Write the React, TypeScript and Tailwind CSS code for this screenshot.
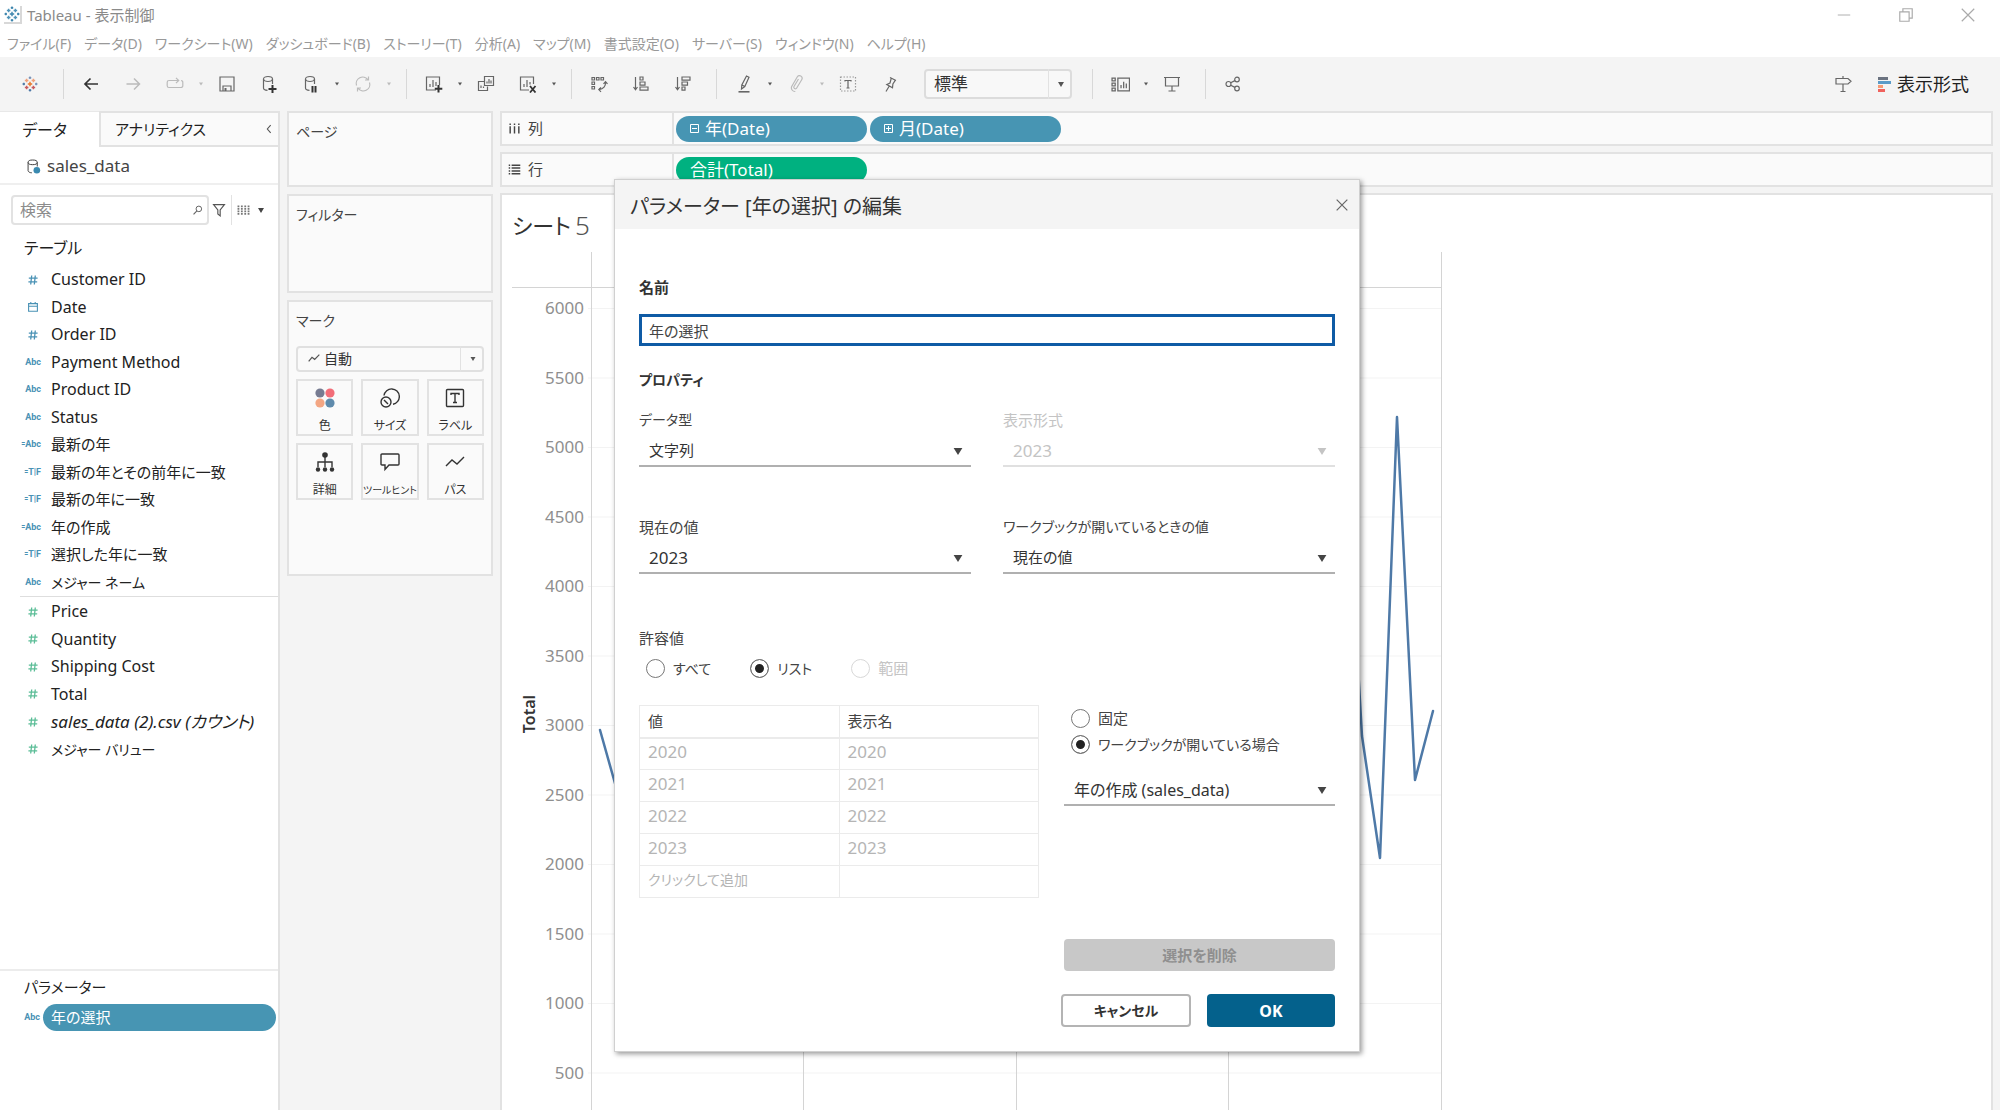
import { useState, type ReactNode } from "react";

type Field = {
  name: string;
  icon: "num" | "date" | "abc" | "calc-abc" | "calc-tf";
  style?: string;
};

const dimensions: Field[] = [
  { name: "Customer ID", icon: "num" },
  { name: "Date", icon: "date" },
  { name: "Order ID", icon: "num" },
  { name: "Payment Method", icon: "abc" },
  { name: "Product ID", icon: "abc" },
  { name: "Status", icon: "abc" },
  { name: "最新の年", icon: "calc-abc", style: "text-[15px]" },
  { name: "最新の年とその前年に一致", icon: "calc-tf", style: "text-[15px]" },
  { name: "最新の年に一致", icon: "calc-tf", style: "text-[15px]" },
  { name: "年の作成", icon: "calc-abc", style: "text-[15px]" },
  { name: "選択した年に一致", icon: "calc-tf", style: "text-[15px]" },
  { name: "メジャー ネーム", icon: "abc", style: "text-[14px]" },
];

const measures: Field[] = [
  { name: "Price", icon: "num" },
  { name: "Quantity", icon: "num" },
  { name: "Shipping Cost", icon: "num" },
  { name: "Total", icon: "num" },
  {
    name: "sales_data (2).csv (カウント)",
    icon: "num",
    style: "text-[17px] italic",
  },
  { name: "メジャー バリュー", icon: "num", style: "text-[14px]" },
];

const menus = [
  "ファイル(F)",
  "データ(D)",
  "ワークシート(W)",
  "ダッシュボード(B)",
  "ストーリー(T)",
  "分析(A)",
  "マップ(M)",
  "書式設定(O)",
  "サーバー(S)",
  "ウィンドウ(N)",
  "ヘルプ(H)",
];

const years = ["2020", "2021", "2022", "2023"];

const axisLabels = [
  6000, 5500, 5000, 4500, 4000, 3500, 3000, 2500, 2000, 1500, 1000, 500,
];

const linePoints =
  "99,478 117,542 135,420 152,600 170,510 188,380 206,560 223,450 241,610 259,500 277,430 294,520 " +
  "312,470 330,590 347,400 365,520 383,610 401,440 418,500 436,380 454,560 472,490 489,610 507,450 " +
  "525,520 542,400 560,580 578,470 596,510 614,620 631,430 649,540 667,460 684,590 702,380 720,520 " +
  "737,460 755,570 772,420 790,500 808,610 826,430 843,170 861,484 879,606 896,165 914,528 932,459";

function Icon({
  children,
  size = 18,
  className = "",
}: {
  children: ReactNode;
  size?: number;
  className?: string;
}) {
  return (
    <svg
      width={size}
      height={size}
      viewBox="0 0 18 18"
      fill="none"
      stroke="currentColor"
      strokeWidth="1.2"
      className={className}
      aria-hidden="true"
    >
      {children}
    </svg>
  );
}

function Triangle({ className = "" }: { className?: string }) {
  return (
    <svg
      viewBox="0 0 10 8"
      fill="currentColor"
      className={className}
      aria-hidden="true"
    >
      <path d="M0 0h10L5 8z" />
    </svg>
  );
}

function TableauMark({ size, colors }: { size: number; colors: string[] }) {
  return (
    <svg
      width={size}
      height={size}
      viewBox="0 0 18 18"
      fill="none"
      strokeWidth="1.6"
      aria-hidden="true"
    >
      <path stroke={colors[0]} d="M9 6.500v5M6.500 9h5" />
      <path stroke={colors[1]} d="M5.200 3v4M3.200 5h4M12.800 3v4M10.800 5h4" />
      <path stroke={colors[2]} d="M5.200 11v4M3.200 13h4M12.800 11v4M10.800 13h4" />
      <path stroke={colors[3]} d="M9 .6v2.800M7.600 2h2.800M16 7.600v2.800M14.600 9h2.800" />
      <path stroke={colors[4]} d="M9 14.600v2.800M7.600 16h2.800M2 7.600v2.800M.6 9h2.800" />
    </svg>
  );
}

function ToolButton({
  label,
  disabled,
  children,
}: {
  label: string;
  disabled?: boolean;
  children: ReactNode;
}) {
  return (
    <button
      type="button"
      aria-label={label}
      disabled={disabled}
      className="flex w-[42px] h-8 items-center justify-center text-[#666] disabled:text-[#bbb]"
    >
      {children}
    </button>
  );
}

function CaretButton({
  label,
  disabled,
}: {
  label: string;
  disabled?: boolean;
}) {
  return (
    <button
      type="button"
      aria-label={label}
      disabled={disabled}
      className="flex w-[10px] h-8 items-center justify-center text-[#555] disabled:text-[#bbb]"
    >
      <Triangle className="w-1 h-1" />
    </button>
  );
}

function Separator() {
  return <div className="w-px h-[30px] ml-3 mr-[6px] bg-[#d8d8d8]" />;
}

function Toolbar() {
  return (
    <div className="flex h-[54px] items-center bg-[#f4f4f4] pl-[9px] pr-[31px]">
      <ToolButton label="スタートページ">
        <TableauMark
          size={16}
          colors={["#e8762b", "#f0a07a", "#c75a5f", "#7a93b8", "#4f7aa8"]}
        />
      </ToolButton>
      <Separator />
      <ToolButton label="戻る">
        <Icon className="text-[#333]">
          <path strokeWidth="1.7" d="M16 9H3M8.500 3.500L3 9l5.500 5.500" />
        </Icon>
      </ToolButton>
      <ToolButton label="進む" disabled>
        <Icon>
          <path strokeWidth="1.5" d="M2.500 9h13M10 3.500L15.500 9 10 14.500" />
        </Icon>
      </ToolButton>
      <ToolButton label="やり直し" disabled>
        <Icon>
          <path d="M5 5.500H3a1.800 1.800 0 0 0-1.800 1.800v3.400A1.800 1.800 0 0 0 3 12.500h12a1.800 1.800 0 0 0 1.800-1.800V7.300A1.800 1.800 0 0 0 15 5.500M5 5.500h7.500M10 2.800l2.700 2.700L10 8.200" />
        </Icon>
      </ToolButton>
      <CaretButton label="やり直しの一覧" disabled />
      <ToolButton label="保存">
        <Icon>
          <path d="M2 2h14v14H2zM5 16v-5h8v5" />
          <path fill="currentColor" d="M6.500 13h2v3h-2z" stroke="none" />
        </Icon>
      </ToolButton>
      <ToolButton label="新しいデータソース">
        <Icon>
          <ellipse cx="8" cy="4" rx="4.500" ry="2.500" />
          <path d="M3.500 4v9c0 1.200 1.800 2.200 4 2.400M12.500 4v5" />
          <path strokeWidth="2" d="M12.500 10v8M8.500 14h8" stroke="#333" />
        </Icon>
      </ToolButton>
      <ToolButton label="自動更新の一時停止">
        <Icon>
          <ellipse cx="8" cy="4" rx="4.500" ry="2.500" />
          <path d="M3.500 4v9c0 1.200 1.800 2.200 4 2.400M12.500 4v5" />
          <path strokeWidth="2" d="M10.500 11v6.500M13.500 11v6.500" stroke="#333" />
        </Icon>
      </ToolButton>
      <CaretButton label="自動更新の一覧" />
      <ToolButton label="更新" disabled>
        <Icon>
          <path d="M2.500 10.500A6.500 6.500 0 0 1 14 4.800M15.500 7.500A6.500 6.500 0 0 1 4 13.200M14.500 1.500v3.500H11M3.500 16.500V13H7" />
        </Icon>
      </ToolButton>
      <CaretButton label="更新の一覧" disabled />
      <Separator />
      <ToolButton label="新しいワークシート">
        <Icon>
          <path d="M11 15H1.500V2h13v8M5 12V9M8 12V5M11 11V7" />
          <path strokeWidth="2" d="M13.500 10v7.500M9.800 13.700h7.500" stroke="#333" />
        </Icon>
      </ToolButton>
      <CaretButton label="新規の一覧" />
      <ToolButton label="複製">
        <Icon>
          <path d="M7.500 1.500h9v9h-9zM10 8.500v-2M12 8.500V4M14 8.500v-3M7 6.500H1.500v9h9v-4M4 13v-2.500M6.500 13v-1.500" />
        </Icon>
      </ToolButton>
      <ToolButton label="シートのクリア">
        <Icon>
          <path d="M10 15H1.500V2h13v7M5 12V9M8 12V5M11 9.500V7" />
          <path strokeWidth="1.800" d="M11 11l5.500 6.500M16.500 11L11 17.500" stroke="#333" />
        </Icon>
      </ToolButton>
      <CaretButton label="クリアの一覧" />
      <Separator />
      <ToolButton label="行と列の交換">
        <Icon>
          <path d="M2 2.500h2.500V5H2zM6.500 2.500H9V5H6.500zM11 2.500h2.500V5H11zM2 7h2.500v2.500H2zM2 11.500h2.500V14H2zM15.500 7c.3 4-2 7.300-6.500 7.600M13.500 8.800l2-2.100 2 2.100M11 12.300l-2.200 2.300L11 16.800" />
        </Icon>
      </ToolButton>
      <ToolButton label="昇順で並べ替え">
        <Icon>
          <path d="M3.500 2v12.500M1.500 12l2 2.800 2-2.800M8 2h3v3H8zM8 7h5v3.200H8zM8 12h8v3.200H8z" />
        </Icon>
      </ToolButton>
      <ToolButton label="降順で並べ替え">
        <Icon>
          <path d="M3.500 2v12.500M1.500 12l2 2.800 2-2.800M8 2h8v3.200H8zM8 7h5.500v3.200H8zM8 12h3v3.200H8z" />
        </Icon>
      </ToolButton>
      <Separator />
      <ToolButton label="ハイライト">
        <Icon>
          <path d="M11.500 1l2.500 1.200L9.800 11.500 6.500 14l.3-4zM7 10l2.800 1.500" />
          <path strokeWidth="1.600" d="M3.500 16.800h11" />
        </Icon>
      </ToolButton>
      <CaretButton label="ハイライトの一覧" />
      <ToolButton label="グループ" disabled>
        <Icon>
          <path d="M11.500 4L7 11.500a1.500 1.500 0 0 0 2.700 1.500l5-8.300a2.600 2.600 0 0 0-4.500-2.700L4.700 11.500a3.600 3.600 0 0 0 3.600 5" />
        </Icon>
      </ToolButton>
      <CaretButton label="グループの一覧" disabled />
      <ToolButton label="マークラベルの表示">
        <Icon>
          <path strokeDasharray="1.500 1.500" stroke="#999" d="M1.500 2h15v14h-15z" />
          <path d="M6 6.500V5.500h6v1M9 5.500v7.500M7.500 13h3" />
        </Icon>
      </ToolButton>
      <ToolButton label="軸の修正">
        <Icon>
          <path d="M9 2.500l6 3M10.300 3.200L9 8 5.800 9.500l5.700 3.200.4-3.700 2.500-3.900M8.300 11L5 16.500" />
        </Icon>
      </ToolButton>
      <div className="relative ml-[13px] mr-2">
        <select
          aria-label="表示サイズ"
          className="w-[148px] h-[30px] appearance-none rounded-sm border-2 border-[#dcdcdc] bg-[#f8f8f8] pl-2 text-[17px] text-[#333]"
        >
          <option>標準</option>
        </select>
        <span className="pointer-events-none absolute right-0 inset-y-0 flex w-6 items-center justify-center border-l border-[#e2e2e2] text-[#555]">
          <Triangle className="w-[6px] h-[5px]" />
        </span>
      </div>
      <Separator />
      <ToolButton label="カードの表示">
        <Icon size={19}>
          <path d="M6.500 3h11v12h-11zM9.500 12.500v-3M12 12.500v-6M14.500 12.500V8" />
          <path d="M1 3h3v2.500H1zM1 7.700h3v2.500H1zM1 12.500h3V15H1z" />
        </Icon>
      </ToolButton>
      <CaretButton label="カードの一覧" />
      <ToolButton label="プレゼンテーション">
        <Icon>
          <path d="M1 2.500h16M2.500 2.500v8.500h13V2.500M9 11v5M5.500 16h7" />
        </Icon>
      </ToolButton>
      <Separator />
      <ToolButton label="共有">
        <Icon>
          <circle cx="4.500" cy="9" r="2.500" />
          <circle cx="13" cy="4.500" r="2.300" />
          <circle cx="13" cy="13.500" r="2.300" />
          <path d="M6.700 7.800l4.200-2.200M6.700 10.200l4.200 2.200" />
        </Icon>
      </ToolButton>
      <div className="ml-auto flex items-center gap-[14px]">
        <ToolButton label="ガイド">
          <Icon>
            <path d="M9 1v2M2 3.500h12l3 2.800-3 2.700H2zM9 9v7.500M6.500 16.500h5" />
          </Icon>
        </ToolButton>
        <button
          type="button"
          className="flex items-center gap-[6px] text-[18px] text-[#1f1f1f]"
        >
          <svg width="13" height="15" viewBox="0 0 13 15" aria-hidden="true">
            <path fill="#6b7380" d="M0 0h10v3H0z" />
            <path fill="#5b9bc8" d="M0 4h13v3H0z" />
            <path fill="#f59b75" d="M0 8h5v3H0z" />
            <path fill="#f0625d" d="M0 12h7v3H0z" />
          </svg>
          表示形式
        </button>
      </div>
    </div>
  );
}

function HashIcon() {
  return (
    <svg
      width="10"
      height="10"
      viewBox="0 0 10 10"
      fill="none"
      stroke="currentColor"
      strokeWidth="1.300"
      className="mr-[3px]"
      aria-hidden="true"
    >
      <path d="M3.700 .5L2.700 9.500M7.300 .5L6.300 9.500M.8 3.200h8.800M.4 6.800h8.800" />
    </svg>
  );
}

function FieldIcon({ icon }: { icon: Field["icon"] }) {
  if (icon === "num") return <HashIcon />;
  if (icon === "date")
    return (
      <svg
        width="10"
        height="10"
        viewBox="0 0 10 10"
        fill="none"
        stroke="currentColor"
        strokeWidth="1.100"
        className="mr-[3px]"
        aria-hidden="true"
      >
        <path d="M.6 1.600h8.800v7.600H.6zM.6 4.200h8.800M2.800 0v2M7.200 0v2" />
      </svg>
    );
  if (icon === "abc") return <>Abc</>;
  return (
    <>
      <span className="text-[7px]">=</span>
      {icon === "calc-abc" ? "Abc" : "T|F"}
    </>
  );
}

function FieldList({ fields, color }: { fields: Field[]; color: string }) {
  return (
    <ul className="grid auto-rows-fr">
      {fields.map((f) => (
        <li
          key={f.name}
          className="flex items-center gap-[10px] pl-4 leading-[27px]"
        >
          <span
            className={`flex w-[25px] items-center justify-end font-['Roboto'] text-[9px] font-bold ${color}`}
          >
            <FieldIcon icon={f.icon} />
          </span>
          <span
            className={`whitespace-nowrap text-[#222] ${f.style ?? "text-[16px]"}`}
          >
            {f.name}
          </span>
        </li>
      ))}
    </ul>
  );
}

function Sidebar() {
  return (
    <aside className="flex w-[280px] shrink-0 flex-col border-r-2 border-[#e2e2e2] bg-white">
      <div className="flex h-9 shrink-0 text-[#1f1f1f]">
        <button
          type="button"
          className="w-[99px] border-t border-[#e8e8e8] pr-[10px] text-[16px]"
        >
          データ
        </button>
        <div className="flex flex-1 items-center justify-between border-2 border-r-0 border-[#e2e2e2] bg-[#fafafa] pl-[14px] pr-1">
          <button type="button" className="text-[15px]">
            アナリティクス
          </button>
          <button type="button" aria-label="折りたたむ">
            <Icon size={10} className="text-[#555]">
              <path strokeWidth="2" d="M12 2L6 9l6 7" />
            </Icon>
          </button>
        </div>
      </div>
      <div className="flex h-[38px] shrink-0 items-center gap-[6px] border-b-2 border-[#efefef] pl-[26px] pt-[2px] text-[17px] text-[#444]">
        <Icon size={15}>
          <ellipse cx="8" cy="4" rx="5.500" ry="2.800" />
          <path d="M2.500 4v10c0 1.300 2 2.500 4.500 2.600M13.500 4v5" />
          <circle cx="13" cy="13.500" r="4" fill="#3a8ab0" stroke="none" />
        </Icon>
        sales_data
      </div>
      <div className="mt-[10px] flex h-[30px] shrink-0 items-center pl-[11px]">
        <div className="flex h-full w-[198px] items-center rounded-sm border-2 border-[#e2e2e2] pl-[7px] pr-1">
          <input
            aria-label="検索"
            placeholder="検索"
            className="min-w-0 flex-1 text-[16px] placeholder:text-[#8c8c8c] outline-none"
          />
          <Icon size={10} className="text-[#666]">
            <circle cx="10.500" cy="7" r="5" strokeWidth="1.800" />
            <path strokeWidth="2" d="M7 10.500L1 17" />
          </Icon>
        </div>
        <button type="button" aria-label="フィルター" className="ml-[3px] text-[#555]">
          <Icon size={14}>
            <path strokeWidth="1.500" d="M2 2h14l-5.500 7v7.500L7.500 14V9z" />
          </Icon>
        </button>
        <span className="ml-[5px] h-full w-px bg-[#e2e2e2]" />
        <button
          type="button"
          aria-label="表示方法"
          className="ml-[5px] flex items-center gap-2 text-[#777]"
        >
          <Icon size={13}>
            <path
              strokeWidth="2.500"
              strokeDasharray="2.500 1"
              d="M2 2v14M6.700 2v14M11.400 2v14M16 2v14"
            />
          </Icon>
          <Triangle className="w-[6px] h-[5px] text-[#444]" />
        </button>
      </div>
      <h2 className="mt-[13px] mb-2 shrink-0 pl-6 text-[16px] leading-5 text-[#1f1f1f]">
        テーブル
      </h2>
      <div className="h-[330px] shrink-0 grid">
        <FieldList fields={dimensions} color="text-[#4a92b5]" />
      </div>
      <div className="ml-5 mb-px h-px shrink-0 bg-[#dedede]" />
      <div className="h-[165px] shrink-0 grid">
        <FieldList fields={measures} color="text-[#5bbd97]" />
      </div>
      <div className="mt-auto h-[141px] shrink-0 border-t-2 border-[#ececec] pt-[6px]">
        <h2 className="pl-6 text-[15px] leading-5 text-[#1f1f1f]">
          パラメーター
        </h2>
        <div className="mt-[7px] flex items-center gap-[3px] pl-4 pr-[2px]">
          <span className="flex w-[24px] justify-end font-['Roboto'] text-[9px] font-bold text-[#4a92b5]">
            Abc
          </span>
          <button
            type="button"
            className="h-[27px] flex-1 rounded-full bg-[#4795b3] pl-2 text-left text-[15px] text-white"
          >
            年の選択
          </button>
        </div>
      </div>
    </aside>
  );
}

function MarkButton({
  label,
  children,
}: {
  label: string;
  children: ReactNode;
}) {
  // the long label has to stay inside its box
  const textSize = label.length > 5 ? "text-[10px]" : "text-[12px]";
  return (
    <button
      type="button"
      className="flex h-[57px] flex-col items-center justify-between whitespace-nowrap border-2 border-[#e2e2e2] pt-[7px] text-[#333]"
    >
      {children}
      <span className={`${textSize} leading-4`}>{label}</span>
    </button>
  );
}

function Cards() {
  return (
    <div className="flex w-[206px] shrink-0 flex-col gap-[7px] text-[14px] leading-5 text-[#444]">
      <section className="h-[76px] border-2 border-[#e2e2e2] bg-[#fafafa] px-[7px] pt-[9px]">
        ページ
      </section>
      <section className="h-[99px] border-2 border-[#e2e2e2] bg-[#fafafa] px-[7px] pt-[9px]">
        フィルター
      </section>
      <section className="h-[276px] border-2 border-[#e2e2e2] bg-[#fafafa] px-[7px] pt-[9px]">
        マーク
        <div className="relative mt-[15px]">
          <select
            aria-label="マークの種類"
            className="h-[26px] w-full appearance-none rounded-sm border-2 border-[#e0e0e0] bg-[#fafafa] pl-[26px] text-[14px] leading-5 text-[#333]"
          >
            <option>自動</option>
          </select>
          <Icon
            size={12}
            className="pointer-events-none absolute left-3 top-[6px] text-[#555]"
          >
            <path strokeWidth="1.800" d="M1 14l5-6 4 3 7-7" />
          </Icon>
          <span className="pointer-events-none absolute right-0 inset-y-0 flex w-6 items-center justify-center border-l border-[#e2e2e2] text-[#555]">
            <Triangle className="w-[6px] h-1" />
          </span>
        </div>
        <div className="mt-[7px] grid grid-cols-3 gap-x-2 gap-y-[7px]">
          <MarkButton label="色">
            <svg width="20" height="20" viewBox="0 0 20 20" aria-hidden="true">
              <circle cx="5" cy="5" r="4.600" fill="#767b91" />
              <circle cx="15" cy="5" r="4.600" fill="#f26d78" />
              <circle cx="5" cy="15" r="4.600" fill="#f3a683" />
              <circle cx="15" cy="15" r="4.600" fill="#5f8bac" />
            </svg>
          </MarkButton>
          <MarkButton label="サイズ">
            <svg
              width="20"
              height="20"
              viewBox="0 0 20 20"
              fill="none"
              stroke="currentColor"
              strokeWidth="1.400"
              aria-hidden="true"
            >
              <path d="M4 7.500A7.700 7.700 0 1 1 13 16.200" />
              <circle cx="6" cy="14" r="5" />
              <path d="M4 12l4 4" />
            </svg>
          </MarkButton>
          <MarkButton label="ラベル">
            <svg
              width="20"
              height="20"
              viewBox="0 0 20 20"
              fill="none"
              stroke="currentColor"
              strokeWidth="1.400"
              aria-hidden="true"
            >
              <rect x="1.500" y="1.500" width="17" height="17" rx="1" />
              <path d="M6 7V5.500h8V7M10 5.500v9M8 14.500h4" />
            </svg>
          </MarkButton>
          <MarkButton label="詳細">
            <svg
              width="20"
              height="20"
              viewBox="0 0 20 20"
              fill="none"
              stroke="currentColor"
              strokeWidth="1.400"
              aria-hidden="true"
            >
              <path d="M10 4v11M3 15v-5h14v5" />
              <g fill="currentColor" stroke="none">
                <circle cx="10" cy="3" r="2.800" />
                <circle cx="3" cy="17.500" r="2.200" />
                <circle cx="10" cy="17.500" r="2.200" />
                <circle cx="17" cy="17.500" r="2.200" />
              </g>
            </svg>
          </MarkButton>
          <MarkButton label="ツールヒント">
            <svg
              width="20"
              height="20"
              viewBox="0 0 20 20"
              fill="none"
              stroke="currentColor"
              strokeWidth="1.400"
              aria-hidden="true"
            >
              <path d="M2 2h16q1 0 1 1v9q0 1-1 1H9l-4 4.500V13H2q-1 0-1-1V3q0-1 1-1z" />
            </svg>
          </MarkButton>
          <MarkButton label="パス">
            <svg
              width="20"
              height="20"
              viewBox="0 0 20 20"
              fill="none"
              stroke="currentColor"
              strokeWidth="1.400"
              aria-hidden="true"
            >
              <path d="M1 14l6-6 5 4 7-7" />
            </svg>
          </MarkButton>
        </div>
      </section>
    </div>
  );
}

function Shelf({
  label,
  icon,
  children,
}: {
  label: string;
  icon: ReactNode;
  children: ReactNode;
}) {
  return (
    <div className="flex h-[35px] shrink-0 border-2 border-[#e2e2e2] bg-[#fafafa]">
      <div className="flex w-[172px] items-center gap-[7px] border-r-2 border-[#e2e2e2] pl-[6px] text-[15px] text-[#444]">
        {icon}
        {label}
      </div>
      <div className="flex items-center gap-[3px] pl-[2px]">{children}</div>
    </div>
  );
}

function Chart() {
  return (
    <svg
      width="942"
      height="860"
      className="block shrink-0"
      role="img"
      aria-label="Total の折れ線グラフ"
    >
      {axisLabels.map((value, i) => (
        <g key={value}>
          <line
            x1="86"
            x2="940"
            y1={56.5 + i * 69.5}
            y2={56.5 + i * 69.5}
            stroke="#f3f3f3"
          />
          <text
            x="82"
            y={62 + i * 69.5}
            textAnchor="end"
            fontSize="17"
            fill="#8f8f8f"
          >
            {value}
          </text>
        </g>
      ))}
      <path
        d="M10 35.500H940M89.500 0V860M301.500 0V860M514.500 0V860M726.500 0V860M939.500 0V860"
        stroke="#d4d4d4"
        fill="none"
      />
      <text
        transform="translate(33 462) rotate(-90)"
        textAnchor="middle"
        fontSize="16"
        fontWeight="600"
        fill="#333"
      >
        Total
      </text>
      <polyline
        points={linePoints}
        transform="translate(-1 0)"
        fill="none"
        stroke="#4e79a7"
        strokeWidth="2.500"
        strokeLinejoin="round"
        strokeLinecap="round"
      />
    </svg>
  );
}

function Worksheet() {
  return (
    <main className="flex min-w-0 flex-1 flex-col gap-[6px]">
      <Shelf
        label="列"
        icon={
          <Icon size={13}>
            <path strokeWidth="2" d="M3 2v2M9 2v2M15 2v2M3 6v10M9 6v10M15 6v10" />
          </Icon>
        }
      >
        <button
          type="button"
          className="flex h-[26px] w-[191px] items-center gap-[6px] rounded-full bg-[#4795b3] pl-[14px] text-[17px] text-white"
        >
          <Icon size={9}>
            <path strokeWidth="2" d="M1 1h16v16H1zM4 9h10" />
          </Icon>
          年(Date)
        </button>
        <button
          type="button"
          className="flex h-[26px] w-[191px] items-center gap-[6px] rounded-full bg-[#4795b3] pl-[14px] text-[17px] text-white"
        >
          <Icon size={9}>
            <path strokeWidth="2" d="M1 1h16v16H1zM4 9h10M9 4v10" />
          </Icon>
          月(Date)
        </button>
      </Shelf>
      <Shelf
        label="行"
        icon={
          <Icon size={13}>
            <path
              strokeWidth="2"
              d="M1 3h2M1 7h2M1 11h2M1 15h2M5 3h12M5 7h12M5 11h12M5 15h12"
            />
          </Icon>
        }
      >
        <button
          type="button"
          className="h-[26px] w-[191px] rounded-full bg-[#00b180] pl-[14px] text-left text-[17px] text-white"
        >
          合計(Total)
        </button>
      </Shelf>
      <section className="flex min-h-0 flex-1 flex-col overflow-hidden border-2 border-b-0 border-[#e2e2e2] bg-white">
        <h1 className="flex h-[57px] shrink-0 items-center gap-1 pl-[10px] pt-1 text-[22px] text-[#333]">
          シート{" "}
          <span className="text-[26px] font-light text-[#555]">5</span>
        </h1>
        <Chart />
      </section>
    </main>
  );
}

function SelectField({
  id,
  label,
  value,
  disabled,
  labelSize = "",
  valueSize = "",
}: {
  id: string;
  label?: string;
  value: string;
  disabled?: boolean;
  labelSize?: string;
  valueSize?: string;
}) {
  return (
    <div className={disabled ? "text-[#c4c4c4]" : "text-[#444]"}>
      {label && (
        <label htmlFor={id} className={`block leading-5 ${labelSize}`}>
          {label}
        </label>
      )}
      <div className="relative">
        <select
          id={id}
          aria-label={label ?? value}
          disabled={disabled}
          className={`h-[37px] w-full appearance-none border-b-2 border-[#b0b0b0] bg-white pl-[10px] pt-[6px] text-[#333] disabled:border-[#e0e0e0] disabled:text-[#c4c4c4] disabled:opacity-100 ${valueSize}`}
        >
          <option>{value}</option>
        </select>
        <Triangle className="pointer-events-none absolute right-2 top-[18px] h-[7px] w-[10px]" />
      </div>
    </div>
  );
}

function Radio({
  name,
  label,
  checked,
  disabled,
  labelSize = "",
  onChange,
}: {
  name: string;
  label: string;
  checked: boolean;
  disabled?: boolean;
  labelSize?: string;
  onChange: () => void;
}) {
  return (
    <label
      className={`flex h-5 items-center gap-[8px] ${disabled ? "text-[#c4c4c4]" : "text-[#444]"} ${labelSize}`}
    >
      <input
        type="radio"
        name={name}
        checked={checked}
        disabled={disabled}
        onChange={onChange}
        className="size-[19px] appearance-none rounded-full border border-[#777] shadow-[inset_0_0_0_4px_white] checked:bg-[#222] disabled:border-[#d8d8d8]"
      />
      {label}
    </label>
  );
}

function ParameterDialog() {
  const [name, setName] = useState("年の選択");
  const [allowed, setAllowed] = useState("list");
  const [timing, setTiming] = useState("open");

  return (
    <div
      role="dialog"
      aria-labelledby="dialog-title"
      className="absolute left-[614px] top-[179px] w-[746px] border border-[#d0d0d0] bg-white text-[15px] text-[#333] shadow-[2px_2px_5px_rgba(0,0,0,0.4)]"
    >
      <header className="flex h-[49px] items-center justify-between bg-[#f4f4f4] pl-[15px] pr-[11px]">
        <h2 id="dialog-title" className="pt-1 text-[20px]">
          パラメーター [年の選択] の編集
        </h2>
        <button type="button" aria-label="閉じる" className="text-[#666]">
          <Icon size={12}>
            <path strokeWidth="1.800" d="M1 1l16 16M17 1L1 17" />
          </Icon>
        </button>
      </header>
      <form
        className="px-6 pt-12 pb-6"
        onSubmit={(e) => e.preventDefault()}
      >
        <label htmlFor="param-name" className="block font-bold leading-5">
          名前
        </label>
        <input
          id="param-name"
          value={name}
          onChange={(e) => setName(e.target.value)}
          className="mt-[17px] block h-8 w-full border-3 border-[#0f5ba5] px-[7px] text-[#444] outline-none"
        />
        <h3 className="mt-6 text-[14px] font-bold leading-5">プロパティ</h3>
        <div className="mt-5 grid grid-cols-2 gap-x-8 gap-y-[50px]">
          <SelectField
            id="data-type"
            label="データ型"
            value="文字列"
            labelSize="text-[14px]"
          />
          <SelectField
            id="format"
            label="表示形式"
            value="2023"
            disabled
            valueSize="text-[17px]"
          />
          <SelectField
            id="current"
            label="現在の値"
            value="2023"
            valueSize="text-[17px]"
          />
          <SelectField
            id="on-open"
            label="ワークブックが開いているときの値"
            value="現在の値"
            labelSize="text-[14px]"
          />
        </div>
        <fieldset className="mt-[54px]">
          <legend className="leading-5 text-[#444]">許容値</legend>
          <div className="mt-[10px] flex gap-[39px] pl-[7px]">
            <Radio
              name="allowed"
              label="すべて"
              labelSize="text-[14px]"
              checked={allowed === "all"}
              onChange={() => setAllowed("all")}
            />
            <Radio
              name="allowed"
              label="リスト"
              labelSize="text-[14px]"
              checked={allowed === "list"}
              onChange={() => setAllowed("list")}
            />
            <Radio
              name="allowed"
              label="範囲"
              checked={allowed === "range"}
              disabled
              onChange={() => setAllowed("range")}
            />
          </div>
        </fieldset>
        <div className="mt-[27px] flex items-start justify-between">
          <table className="w-[400px] table-fixed border-collapse text-left text-[#b5b5b5]">
            <thead className="text-[#444]">
              <tr className="h-8">
                <th className="border border-b-2 border-[#ebebeb] px-2 font-normal leading-5">
                  値
                </th>
                <th className="border border-b-2 border-[#ebebeb] px-2 font-normal leading-5">
                  表示名
                </th>
              </tr>
            </thead>
            <tbody>
              {years.map((year) => (
                <tr key={year} className="h-8 text-[17px]">
                  <td className="border border-[#ebebeb] px-2 pb-[3px] leading-5">
                    {year}
                  </td>
                  <td className="border border-[#ebebeb] px-2 pb-[3px] leading-5">
                    {year}
                  </td>
                </tr>
              ))}
              <tr className="h-8 text-[14px]">
                <td className="border border-[#ebebeb] px-2 pb-[3px] leading-5">
                  クリックして追加
                </td>
                <td className="border border-[#ebebeb]" />
              </tr>
            </tbody>
          </table>
          <div className="w-[271px] pt-[3px]">
            <div className="flex flex-col gap-[6px] pl-[7px]">
              <Radio
                name="timing"
                label="固定"
                checked={timing === "fixed"}
                onChange={() => setTiming("fixed")}
              />
              <Radio
                name="timing"
                label="ワークブックが開いている場合"
                labelSize="text-[14px]"
                checked={timing === "open"}
                onChange={() => setTiming("open")}
              />
            </div>
            <div className="mt-[15px]">
              <SelectField
                id="source"
                value="年の作成 (sales_data)"
                valueSize="text-[16px]"
              />
            </div>
          </div>
        </div>
        <button
          type="button"
          disabled
          className="mt-[41px] ml-auto block h-8 w-[271px] rounded-sm bg-[#c8c8c8] font-bold text-[#8f8f8f]"
        >
          選択を削除
        </button>
        <div className="mt-[23px] flex justify-end gap-4">
          <button
            type="button"
            className="h-[33px] w-[130px] rounded-sm border-2 border-[#b4b4b4] text-[14px] font-bold"
          >
            キャンセル
          </button>
          <button
            type="submit"
            className="h-[33px] w-[128px] rounded-sm bg-[#04618c] text-[16px] font-bold text-white"
          >
            OK
          </button>
        </div>
      </form>
    </div>
  );
}

export default function App() {
  return (
    <div className="relative flex h-screen flex-col overflow-hidden bg-[#f4f4f4] font-['Noto_Sans','Noto_Sans_CJK_JP',sans-serif] [font-feature-settings:'palt']">
      <header className="h-[57px] shrink-0 bg-white">
        <div className="flex h-[30px] items-center justify-between pl-1 pr-[25px] text-[#8a8a8a]">
          <div className="flex items-center gap-[5px] text-[15px]">
            <span className="flex size-[18px] items-center justify-center border-b-2 border-r-2 border-[#d8d8d8]">
              <TableauMark
                size={16}
                colors={["#3c85ad", "#4e93b8", "#4e93b8", "#3c85ad", "#3c85ad"]}
              />
            </span>
            Tableau - 表示制御
          </div>
          <div className="flex gap-12 text-[#aaa]">
            <button type="button" aria-label="最小化">
              <Icon size={14}>
                <path d="M1 9h16" />
              </Icon>
            </button>
            <button type="button" aria-label="元に戻す">
              <Icon size={14}>
                <path strokeWidth="1.500" d="M1 5h12v12H1zM5 5V1h12v12h-4" />
              </Icon>
            </button>
            <button type="button" aria-label="ウィンドウを閉じる">
              <Icon size={14}>
                <path strokeWidth="1.500" d="M1 1l16 16M17 1L1 17" />
              </Icon>
            </button>
          </div>
        </div>
        <nav className="flex h-[27px] items-center gap-[13px] pl-[7px] text-[14px] text-[#999]">
          {menus.map((menu) => (
            <button key={menu} type="button" className="whitespace-nowrap">
              {menu}
            </button>
          ))}
        </nav>
      </header>
      <Toolbar />
      <div className="flex min-h-0 flex-1 gap-[7px] pr-[7px]">
        <Sidebar />
        <Cards />
        <Worksheet />
      </div>
      <ParameterDialog />
    </div>
  );
}
